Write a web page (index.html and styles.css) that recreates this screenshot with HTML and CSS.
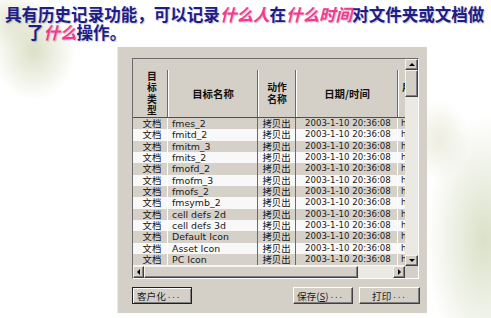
FILE: index.html
```html
<!DOCTYPE html>
<html lang="zh">
<head>
<meta charset="utf-8">
<link rel="stylesheet" href="styles.css">
</head>
<body>
<div class="title">
  <span class="line">具有历史记录功能，可以记录<em>什么人</em>在<em>什么时间</em>对文件夹或文档做</span>
  <span class="line indent">了<em>什么</em>操作。</span>
</div>

<div class="panel">
  <div class="listbox">
    <div class="main">
      <div class="head">
        <div class="hc c1">目<br>标<br>类<br>型</div>
        <div class="hc c2">目标名称</div>
        <div class="hc c3">动作<br>名称</div>
        <div class="hc c4">日期/时间</div>
        <div class="hc c5 up">用户</div>
      </div>
      <div class="row"><span class="c c1 cj">文档</span><span class="c c2">fmes_2</span><span class="c c3 cj">拷贝出</span><span class="c c4">2003-1-10 20:36:08</span><span class="c c5">host</span></div>
      <div class="row alt"><span class="c c1 cj">文档</span><span class="c c2">fmitd_2</span><span class="c c3 cj">拷贝出</span><span class="c c4">2003-1-10 20:36:08</span><span class="c c5">host</span></div>
      <div class="row"><span class="c c1 cj">文档</span><span class="c c2">fmitm_3</span><span class="c c3 cj">拷贝出</span><span class="c c4">2003-1-10 20:36:08</span><span class="c c5">host</span></div>
      <div class="row alt"><span class="c c1 cj">文档</span><span class="c c2">fmits_2</span><span class="c c3 cj">拷贝出</span><span class="c c4">2003-1-10 20:36:08</span><span class="c c5">host</span></div>
      <div class="row"><span class="c c1 cj">文档</span><span class="c c2">fmofd_2</span><span class="c c3 cj">拷贝出</span><span class="c c4">2003-1-10 20:36:08</span><span class="c c5">host</span></div>
      <div class="row alt"><span class="c c1 cj">文档</span><span class="c c2">fmofm_3</span><span class="c c3 cj">拷贝出</span><span class="c c4">2003-1-10 20:36:08</span><span class="c c5">host</span></div>
      <div class="row"><span class="c c1 cj">文档</span><span class="c c2">fmofs_2</span><span class="c c3 cj">拷贝出</span><span class="c c4">2003-1-10 20:36:08</span><span class="c c5">host</span></div>
      <div class="row alt"><span class="c c1 cj">文档</span><span class="c c2">fmsymb_2</span><span class="c c3 cj">拷贝出</span><span class="c c4">2003-1-10 20:36:08</span><span class="c c5">host</span></div>
      <div class="row"><span class="c c1 cj">文档</span><span class="c c2">cell defs 2d</span><span class="c c3 cj">拷贝出</span><span class="c c4">2003-1-10 20:36:08</span><span class="c c5">host</span></div>
      <div class="row alt"><span class="c c1 cj">文档</span><span class="c c2">cell defs 3d</span><span class="c c3 cj">拷贝出</span><span class="c c4">2003-1-10 20:36:08</span><span class="c c5">host</span></div>
      <div class="row"><span class="c c1 cj">文档</span><span class="c c2">Default Icon</span><span class="c c3 cj">拷贝出</span><span class="c c4">2003-1-10 20:36:08</span><span class="c c5">host</span></div>
      <div class="row alt"><span class="c c1 cj">文档</span><span class="c c2">Asset Icon</span><span class="c c3 cj">拷贝出</span><span class="c c4">2003-1-10 20:36:08</span><span class="c c5">host</span></div>
      <div class="row"><span class="c c1 cj">文档</span><span class="c c2">PC Icon</span><span class="c c3 cj">拷贝出</span><span class="c c4">2003-1-10 20:36:08</span><span class="c c5">host</span></div>
    </div>
    <div class="vscroll">
      <div class="sbtn"><span class="arr arr-up"></span></div>
      <div class="thumb vthumb"></div>
      <div class="track"></div>
      <div class="sbtn"><span class="arr arr-down"></span></div>
    </div>
    <div class="hscroll">
      <div class="sbtn hbtn-l"><span class="arr arr-left"></span></div>
      <div class="thumb hthumb"></div>
      <div class="track"></div>
      <div class="sbtn hbtn-r"><span class="arr arr-right"></span></div>
    </div>
    <div class="corner"></div>
  </div>

  <div class="buttons">
    <div class="btn btn-default btn-left">客户化<span class="dots">...</span></div>
    <div class="btn-group">
      <div class="btn btn-left">保存(<u>S</u>)<span class="dots">...</span></div>
      <div class="btn">打印<span class="dots">...</span></div>
    </div>
  </div>
</div>
</body>
</html>
```

FILE: styles.css
```css
html, body {
  margin: 0;
  padding: 0;
}
body {
  width: 491px;
  height: 318px;
  overflow: hidden;
  background:
    radial-gradient(ellipse 42px 50px at 34px 50px, rgba(210, 216, 184, 0.8), rgba(210, 216, 184, 0) 100%),
    radial-gradient(ellipse 32px 30px at 10px 20px, rgba(222, 226, 200, 0.75), rgba(222, 226, 200, 0) 100%),
    radial-gradient(ellipse 58px 125px at 484px 240px, rgba(214, 221, 194, 0.9), rgba(214, 221, 194, 0) 100%),
    radial-gradient(ellipse 30px 40px at 440px 140px, rgba(230, 230, 212, 0.75), rgba(230, 230, 212, 0) 100%),
    #ffffff;
  font-family: "Noto Sans CJK SC", sans-serif;
}

/* title */
.title {
  padding: 5px 0 0 5px;
  font-family: "Noto Sans CJK SC", sans-serif;
  font-weight: 700;
  font-size: 16.55px;
  line-height: 18px;
  color: #1d1d8a;
  text-shadow: 1px 1px 1px rgba(60, 60, 90, 0.3);
  white-space: nowrap;
}
.title .line {
  display: block;
}
.title .indent {
  padding-left: 22px;
}
.title em {
  color: #f23a92;
  font-style: italic;
}

/* dialog panel */
.panel {
  margin: 6px 0 0 117px;
  width: 310px;
  height: 266px;
  box-sizing: border-box;
  background: #d4d0c8;
  border-left: 1px solid #ecebe7;
  padding: 11px 0 0 14px;
}

.listbox {
  width: 287px;
  height: 221px;
  box-sizing: border-box;
  border: 1px solid;
  border-color: #6c6c6c #ffffff #ffffff #6c6c6c;
  display: grid;
  grid-template-columns: 272px 13px;
  grid-template-rows: 207px 12px;
}

.main {
  overflow: hidden;
  background: #f8f8f8;
  white-space: nowrap;
}

.head {
  display: flex;
  height: 59px;
  box-sizing: border-box;
  border-bottom: 1px solid #505050;
  background: #d4d0c8;
}
.hc {
  flex: none;
  position: relative;
  box-sizing: border-box;
  padding-top: 11px;
  display: flex;
  align-items: center;
  justify-content: center;
  text-align: center;
  font-family: "Noto Sans CJK SC", sans-serif;
  font-weight: 700;
  font-size: 9.8px;
  line-height: 11.3px;
  color: #111;
}
.hc::after {
  content: "";
  position: absolute;
  right: 0;
  top: 11px;
  bottom: 0;
  width: 1px;
  background: #6a6a6a;
  box-shadow: 1px 0 0 #ffffff;
}
.hc.c1 { padding-left: 3px; }
.hc.c2 { font-size: 10.4px; }
.hc.c4 { font-size: 10.4px; }
.hc.c5 {
  justify-content: flex-start;
  padding-left: 4px;
  padding-bottom: 12px;
}
.hc.c5::after { display: none; }

.c1 { width: 35px; }
.c2 { width: 90px; }
.c3 { width: 38px; }
.c4 { width: 102px; }
.c5 { width: 60px; }

.row {
  display: flex;
  height: 11.33px;
  background: #d5d1c9;
}
.row.alt {
  background: #f8f8f8;
}
.c {
  flex: none;
  box-sizing: border-box;
  height: 100%;
  line-height: 11.33px;
  font-family: "DejaVu Sans", sans-serif;
  font-size: 8.6px;
  color: #1a1a1a;
}
.c.cj {
  font-family: "Noto Sans CJK SC", sans-serif;
  font-size: 9.4px;
  color: #111;
}
.c.c1 {
  text-align: center;
  padding-left: 4px;
  border-right: 1px solid #ffffff;
}
.c.c2 {
  padding-left: 4px;
  font-size: 9.4px;
  border-right: 1px solid #6a6a6a;
}
.c.c3 {
  text-align: center;
  border-right: 1px solid #6a6a6a;
}
.c.c4 {
  padding-left: 9px;
  border-right: 1px solid #ffffff;
}
.c.c5 {
  padding-left: 3px;
}

/* scrollbars */
.vscroll {
  display: flex;
  flex-direction: column;
  background: #ebe9e4;
}
.hscroll {
  display: flex;
  background: #ebe9e4;
}
.sbtn, .thumb {
  box-sizing: border-box;
  background: #d4d0c8;
  border: 1px solid;
  border-color: #f4f3f0 #404040 #404040 #f4f3f0;
  box-shadow: inset -1px -1px 0 #808080;
}
.sbtn {
  display: flex;
  align-items: center;
  justify-content: center;
  flex: none;
}
.vscroll .sbtn { height: 11px; }
.vthumb { height: 27px; flex: none; }
.hbtn-l { width: 11px; }
.hbtn-r { width: 12px; }
.hthumb { width: 214px; flex: none; }
.track { flex: 1; }
.corner { background: #d4d0c8; }

.arr {
  width: 0;
  height: 0;
  border-style: solid;
}
.arr-up {
  border-width: 0 3px 3px 3px;
  border-color: transparent transparent #000 transparent;
}
.arr-down {
  border-width: 3px 3px 0 3px;
  border-color: #000 transparent transparent transparent;
}
.arr-left {
  border-width: 3px 3px 3px 0;
  border-color: transparent #000 transparent transparent;
}
.arr-right {
  border-width: 3px 0 3px 3px;
  border-color: transparent transparent transparent #000;
}

/* dialog buttons */
.buttons {
  width: 288px;
  margin-top: 8px;
  display: flex;
  justify-content: space-between;
}
.btn-group {
  display: flex;
  gap: 6px;
}
.btn {
  width: 60px;
  height: 17px;
  box-sizing: border-box;
  background: #d4d0c8;
  border: 1px solid;
  border-color: #ffffff #404040 #404040 #ffffff;
  box-shadow: inset -1px -1px 0 #808080;
  display: flex;
  align-items: center;
  justify-content: center;
  font-family: "Noto Sans CJK SC", sans-serif;
  font-size: 9.6px;
  line-height: 14px;
  color: #1a1a1a;
  white-space: nowrap;
}
.btn-group .btn:last-child { width: 61px; }
.btn-left {
  justify-content: flex-start;
  padding-left: 3px;
}
.btn-default {
  border-color: #202020;
  box-shadow: inset 1px 1px 0 #ffffff, inset -1px -1px 0 #808080;
  padding-left: 4px;
}
.dots {
  font-family: "DejaVu Sans", sans-serif;
  font-size: 8px;
  letter-spacing: 2px;
  margin-left: 2px;
}
.btn u {
  text-decoration: underline;
}
```
